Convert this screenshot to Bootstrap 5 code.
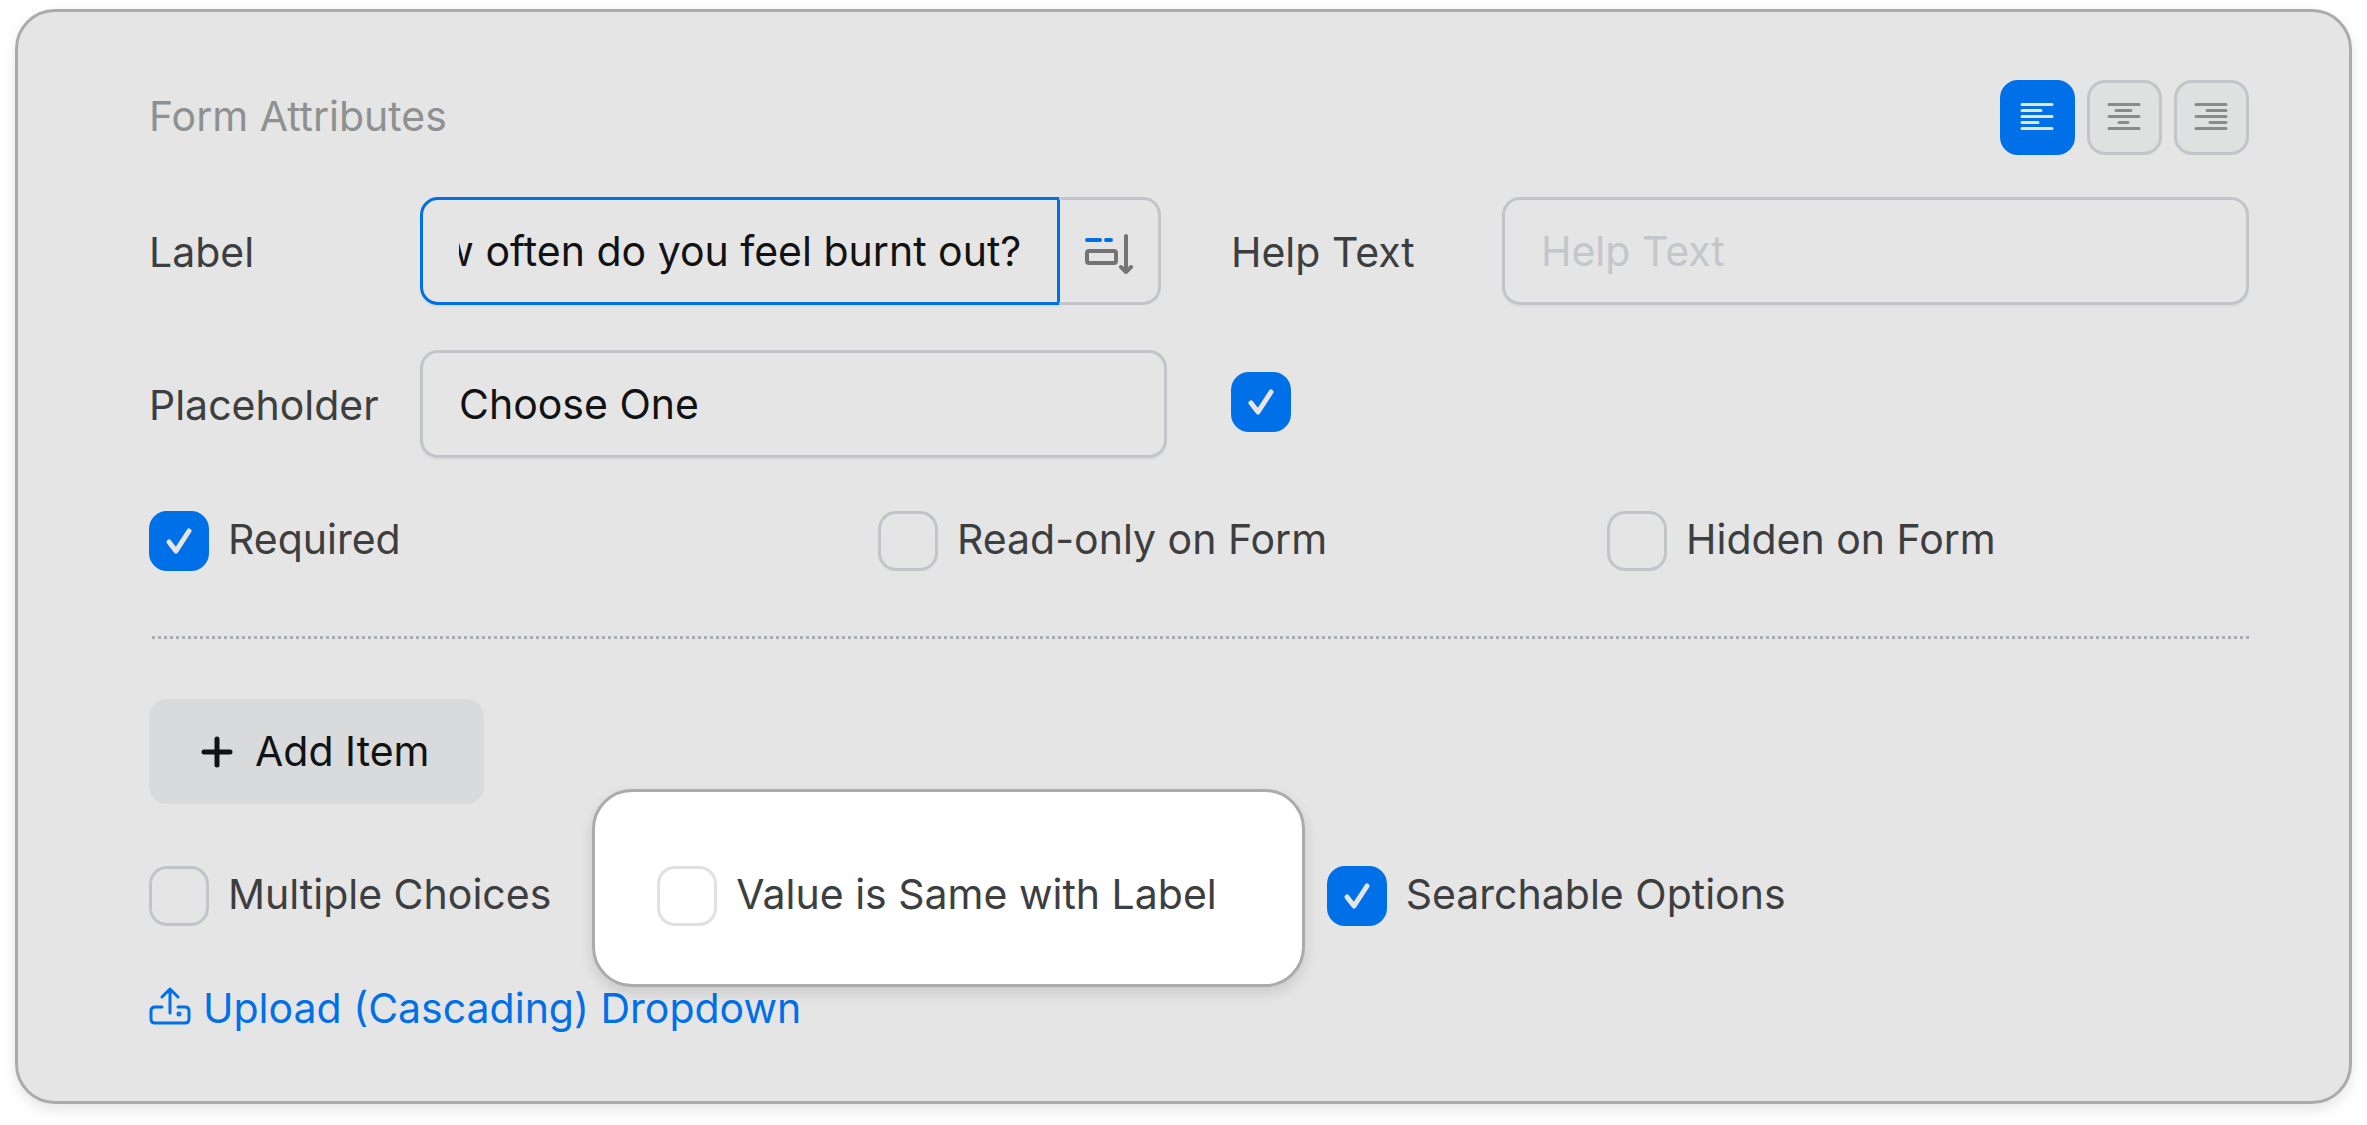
<!DOCTYPE html>
<html lang="en">
<head>
<meta charset="utf-8">
<meta name="viewport" content="width=device-width, initial-scale=1">
<title>Form Attributes</title>
<link rel="stylesheet" href="https://cdn.jsdelivr.net/npm/bootstrap@5.3.0/dist/css/bootstrap.min.css">
<style>
  :root { --accent: #0070e8; --line: #c1c5ca; --panel: #e5e5e5; --ink: #3d3e40; --edge: #ababab; }
  body { background: #fff; color: var(--ink); font-family: Inter, "Liberation Sans", sans-serif; font-size: 41px; line-height: 50px; }
  .panel { margin: 9px 15px 20px; padding: 68px 100px 72px 131px; background: var(--panel); border: 3px solid var(--edge); border-radius: 40px; box-shadow: 0 6px 14px rgba(0,0,0,.1); }
  .panel-title { font-size: 41px; line-height: 50px; font-weight: 400; color: #8f9092; padding-bottom: 4px; }
  .align-btn { width: 75px; height: 75px; border: 3px solid var(--line); border-radius: 18px; background: #dfe1e1; color: #8b8b8b; }
  .align-btn.active { background: var(--accent); border-color: var(--accent); color: var(--panel); }
  .fields { column-gap: 64px; row-gap: 45px; margin-top: 42px; display: grid; grid-template-columns: 1fr 1fr; }
  .field-name { flex: 0 0 271px; padding-top: 2px; }
  .panel .form-control { height: 108px; padding: 0 36px; border: 3px solid var(--line); border-radius: 18px; background: transparent; color: #111214; font-size: 41px; line-height: 50px; box-shadow: 0 2px 2px rgba(0,0,0,.04); }
  .panel .form-control::placeholder { color: #c3c6cb; }
  .panel .input-group { margin-right: 6px; }
  .panel .input-group .form-control { border-color: var(--accent); border-radius: 18px 0 0 18px; }
  .reorder-btn { width: 102px; border: 3px solid var(--line); border-left: 0; border-radius: 0 18px 18px 0; color: #747474; }
  .panel .form-check-input { flex: none; width: 60px; height: 60px; margin: 0; float: none; border: 3px solid var(--line); border-radius: 18px; background-color: transparent; background-size: 60px 60px; background-position: center; }
  .panel .form-check-input:checked { background-color: var(--accent); border-color: var(--accent); background-image: url("data:image/svg+xml,%3Csvg xmlns='http://www.w3.org/2000/svg' viewBox='0 0 60 60'%3E%3Cpath d='M20 31l7 9 13-20' fill='none' stroke='%23e5e5e5' stroke-width='5' stroke-linecap='round' stroke-linejoin='round'/%3E%3C/svg%3E"); }
  .tick { display: flex; align-items: center; gap: 19px; white-space: nowrap; }
  .tick label { padding-bottom: 5px; }
  .flags { display: grid; grid-template-columns: repeat(3, 1fr); column-gap: 87px; margin-top: 53px; }
  .divider { margin: 65px 0 60px 3px; border: 0; border-top: 3px dotted #a9acb1; opacity: 1; }
  .add-btn { height: 105px; padding: 0 55px 0 52px; gap: 22px; border: 0; border-radius: 18px; background: #d8dadc; color: #111214; font-size: 41px; }
  .options { margin-top: -15px; }
  .callout-box { position: relative; margin: 0 22px 0 41px; padding: 74px 85px 58px 62px; background: #fff; border: 3px solid var(--edge); border-radius: 40px; box-shadow: 0 6px 14px rgba(0,0,0,.12); }
  .panel .callout-box .form-check-input { border-color: #e0e0e0; }
  .upload-link { line-height: 42px; gap: 12px; color: var(--accent); text-decoration: none; }
</style>
</head>
<body>
<form class="panel">
  <div class="d-flex justify-content-between align-items-center">
    <h2 class="panel-title mb-0">Form Attributes</h2>
    <div class="d-flex" style="gap:12px">
      <button type="button" class="btn align-btn active p-0 d-flex align-items-center justify-content-center" aria-label="Align left">
        <svg width="38" height="30" fill="none" stroke="currentColor" stroke-width="3" stroke-linecap="round"><path d="M3 1.5h30M3 7.5h19M3 13.5h30M3 19.5h16M3 25.5h30"/></svg>
      </button>
      <button type="button" class="btn align-btn p-0 d-flex align-items-center justify-content-center" aria-label="Align centre">
        <svg width="38" height="30" fill="none" stroke="currentColor" stroke-width="3" stroke-linecap="round"><path d="M3 1.5h30M10 7.5h15M3 13.5h30M13 19.5h9M3 25.5h30"/></svg>
      </button>
      <button type="button" class="btn align-btn p-0 d-flex align-items-center justify-content-center" aria-label="Align right">
        <svg width="38" height="30" fill="none" stroke="currentColor" stroke-width="3" stroke-linecap="round"><path d="M3 1.5h30M14 7.5h19M3 13.5h30M17 19.5h16M3 25.5h30"/></svg>
      </button>
    </div>
  </div>

  <div class="fields">
    <div class="d-flex align-items-center">
      <label class="field-name" for="fieldLabel">Label</label>
      <div class="input-group flex-nowrap">
        <input type="text" class="form-control" id="fieldLabel" value="How often do you feel burnt out?">
        <button type="button" class="btn reorder-btn p-0 d-flex align-items-center justify-content-center" aria-label="Label position">
          <svg width="50" height="46" fill="none" stroke="currentColor" stroke-width="4" stroke-linecap="round" stroke-linejoin="round"><path d="M3 12h13M22 12h5" stroke="#0070e8"/><rect x="3" y="23" width="29" height="12" rx="2"/><path d="M42 8v36M37 39l5 5 5-5"/></svg>
        </button>
      </div>
    </div>
    <div class="d-flex align-items-center">
      <label class="field-name" for="helpText">Help Text</label>
      <input type="text" class="form-control" id="helpText" placeholder="Help Text">
    </div>
    <div class="d-flex align-items-center">
      <label class="field-name" for="placeholderText">Placeholder</label>
      <input type="text" class="form-control" id="placeholderText" value="Choose One">
    </div>
    <div class="d-flex align-items-center pb-1">
      <input class="form-check-input" type="checkbox" checked aria-label="Use placeholder">
    </div>
  </div>

  <div class="flags">
    <div class="tick"><input class="form-check-input" type="checkbox" id="required" checked><label for="required">Required</label></div>
    <div class="tick"><input class="form-check-input" type="checkbox" id="readonly"><label for="readonly">Read-only on Form</label></div>
    <div class="tick"><input class="form-check-input" type="checkbox" id="hiddenForm"><label for="hiddenForm">Hidden on Form</label></div>
  </div>

  <hr class="divider">

  <button type="button" class="btn add-btn d-inline-flex align-items-center">
    <svg width="32" height="32" fill="none" stroke="currentColor" stroke-width="5" stroke-linecap="round"><path d="M16 3v26M3 16h26"/></svg>
    Add Item
  </button>

  <div class="options d-flex align-items-baseline">
    <div class="tick"><input class="form-check-input" type="checkbox" id="multiple"><label for="multiple">Multiple Choices</label></div>
    <div class="callout-box tick"><input class="form-check-input" type="checkbox" id="sameValue"><label for="sameValue">Value is Same with Label</label></div>
    <div class="tick"><input class="form-check-input" type="checkbox" id="searchable" checked><label for="searchable">Searchable Options</label></div>
  </div>

  <div class="d-flex">
    <a href="#" class="upload-link d-inline-flex align-items-center">
      <svg width="42" height="42" fill="none" stroke="currentColor" stroke-width="3" stroke-linecap="round" stroke-linejoin="round"><path d="M13 20H6q-4 0-4 4v8q0 4 4 4h30q4 0 4-4v-8q0-4-4-4h-7M21 26V2M13 10l8-8 8 8"/><circle cx="30" cy="27" r="1"/></svg>
      Upload (Cascading) Dropdown
    </a>
  </div>
</form>
<script src="https://cdn.jsdelivr.net/npm/bootstrap@5.3.0/dist/js/bootstrap.bundle.min.js"></script>
<script>
  // Keep the end of a long label in view.
  window.addEventListener('load', function () {
    var box = document.getElementById('fieldLabel');
    box.scrollLeft = box.scrollWidth;
  });
</script>
</body>
</html>
